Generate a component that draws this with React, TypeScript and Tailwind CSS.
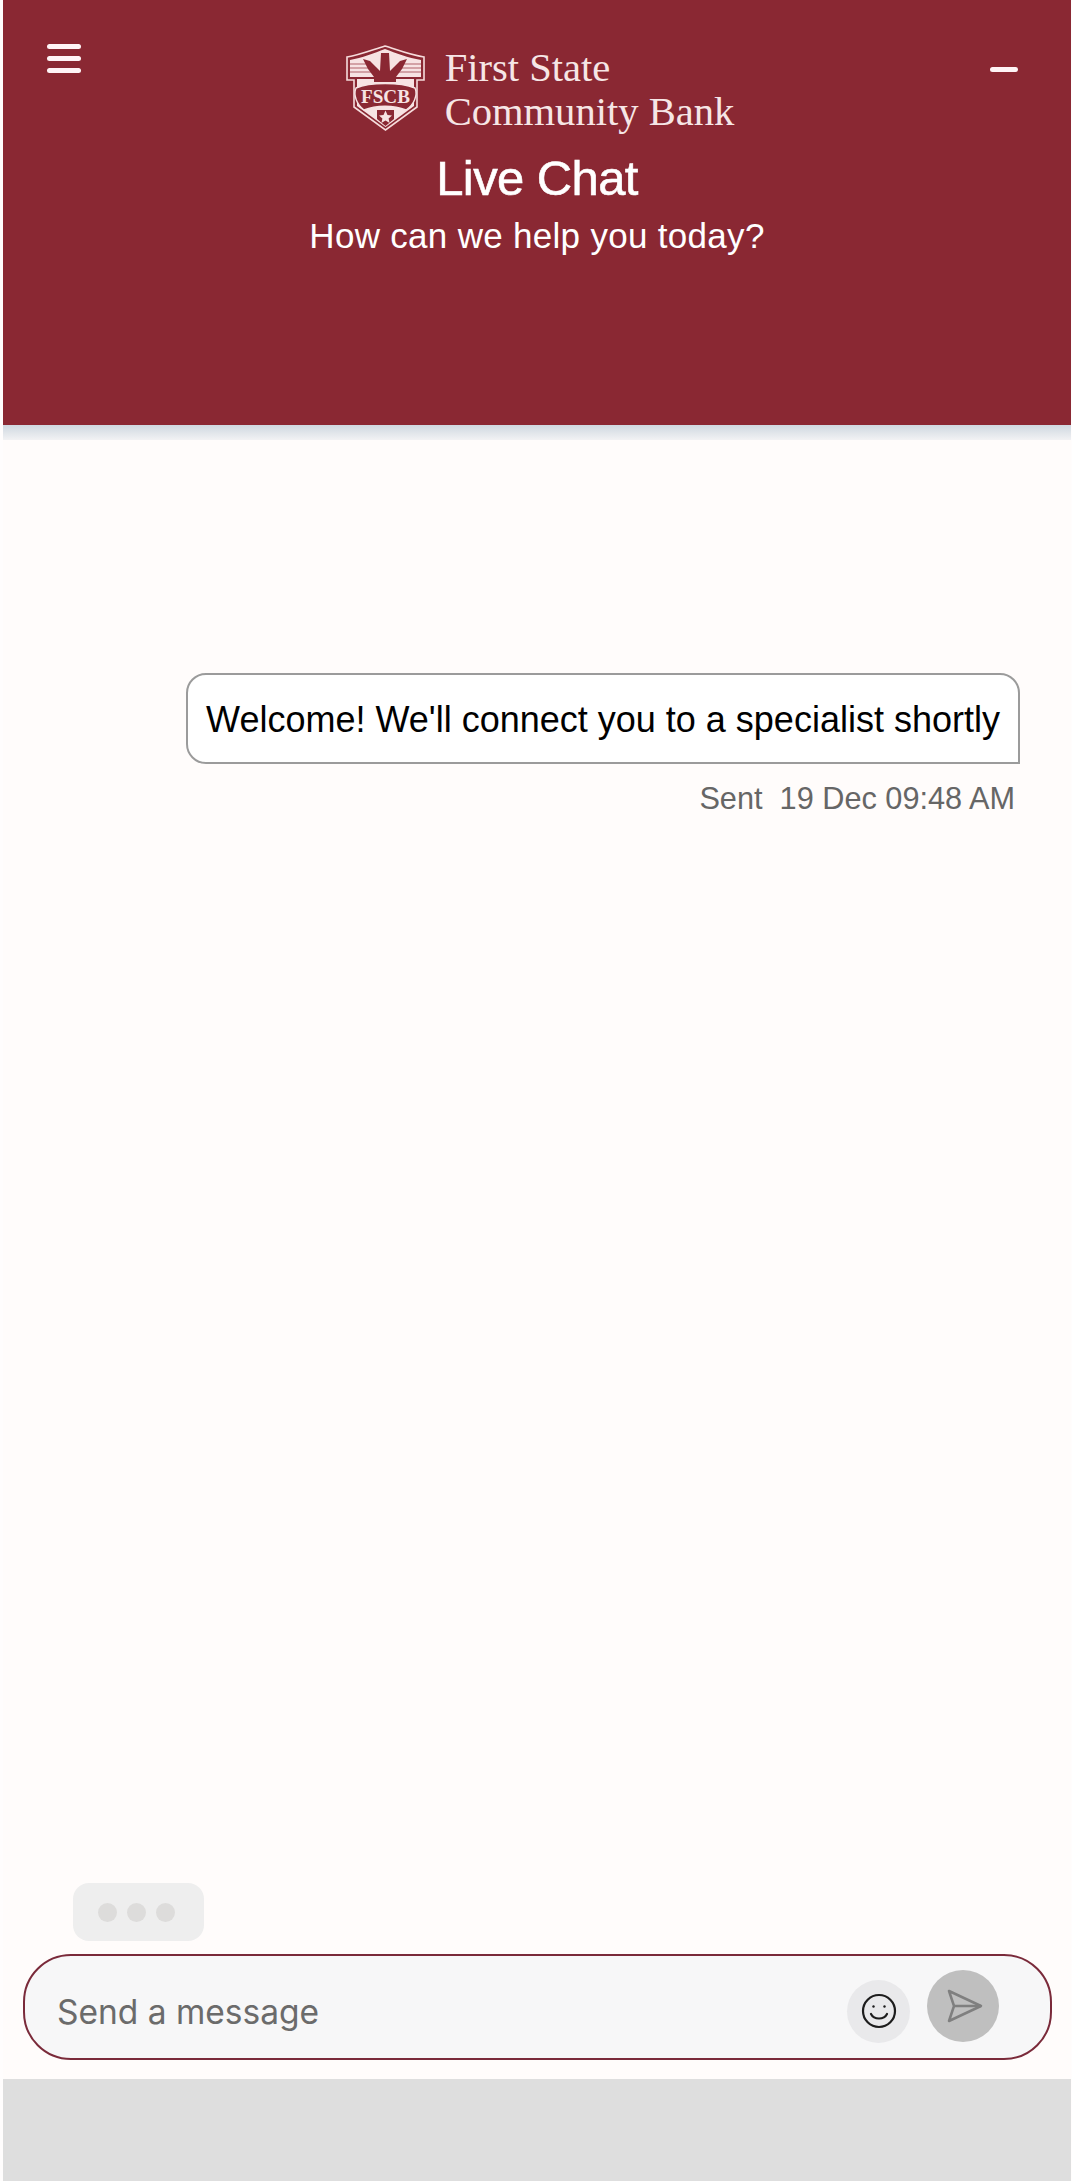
import React from "react";

function Logo() {
  return (
    <svg width="80" height="86" viewBox="0 0 80 86" className="shrink-0">
      <path d="M1 12 C 14 10 26 5 39 1 C 52 5 64 10 78 12 V 35 H 71 V 62 L 39.5 85 L 8 62 V 35 H 1 Z" fill="#8a2833" stroke="#f6dcdc" strokeWidth="1.6" />
      <path d="M4 15 C 16 13 28 8 39 4 C 50 8 62 13 75 15 V 32 H 4 Z" fill="#f7e3e3" />
      <path d="M11 34 H 68 V 61 L 39.5 82 L 11 61 Z" fill="#f7e3e3" />
      <path d="M4 19 H 23 M4 23 H 25 M4 27 H 27 M56 19 H 75 M54 23 H 75 M52 27 H 75" stroke="#c88d93" strokeWidth="1.6" />
      <path d="M17 14 L 24 16 L 30 22 L 34 26 L 35 8 H 43 L 44 26 L 48 22 L 54 16 L 61 14 L 56 24 L 50 32 V 37 H 28 V 32 L 22 24 Z" fill="#8a2833" />
      <path d="M10 43 C 24 37 54 37 69 43 C 72 50 68 60 60 65 C 48 60 30 60 18 65 C 11 60 7 50 10 43 Z" fill="#8a2833" stroke="#f7e3e3" strokeWidth="1.4" />
      <text x="39.5" y="58" textAnchor="middle" fontFamily="'Liberation Serif', serif" fontWeight="700" fontSize="18" fill="#f7e3e3" textLength="49" lengthAdjust="spacingAndGlyphs">FSCB</text>
      <path d="M31 65 H 48 V 74 L 39.5 81 L 31 74 Z" fill="#8a2833" />
      <path d="M39.5 65.5 L 41.5 70 L 46 70.5 L 42.6 73.6 L 43.6 78 L 39.5 75.6 L 35.4 78 L 36.4 73.6 L 33 70.5 L 37.5 70 Z" fill="#f7e3e3" />
    </svg>
  );
}

export default function App() {
  return (
    <div className="min-h-[2181px] bg-[#fffdfd] pl-[3px] pr-px font-['Liberation_Sans',sans-serif]">
      <div className="flex h-[2181px] flex-col bg-[#fffcfb]">
        <header className="relative flex h-[425px] shrink-0 flex-col items-center bg-[#8a2833] pt-[45px] text-white">
          <div className="absolute left-[44px] top-[44px] flex w-[34px] flex-col gap-[7px]">
            <span className="h-[5px] rounded-sm bg-[#fff4f6]" />
            <span className="h-[5px] rounded-sm bg-[#fff4f6]" />
            <span className="h-[5px] rounded-sm bg-[#fff4f6]" />
          </div>
          <span className="absolute left-[987px] top-[67px] h-[5px] w-[28px] rounded-sm bg-[#fff4f6]" />
          <div className="ml-[6px] flex items-start gap-[19px]">
            <Logo />
            <div className="pt-[1px] font-['Liberation_Serif',serif] text-[40.6px] leading-[44px] text-[#f6e6e6]">
              <div>First State</div>
              <div>Community Bank</div>
            </div>
          </div>
          <h1 className="mt-[16px] text-[49px] leading-[56px] tracking-[-0.6px] [-webkit-text-stroke:0.6px_white]">Live Chat</h1>
          <p className="mt-[8px] text-[35px] leading-[44px] tracking-[0.3px]">How can we help you today?</p>
        </header>
        <div className="h-[15px] shrink-0 bg-gradient-to-b from-[#cfd8e0] to-[#f2f2f4]" />
        <main className="flex flex-1 flex-col">
          <div className="mr-[51px] mt-[233px] self-end">
            <div className="flex h-[91px] w-[834px] items-center justify-center rounded-[20px] rounded-br-none border-2 border-[#9b9b9b] bg-white pt-[2px] text-[36px] text-black">
              Welcome! We'll connect you to a specialist shortly
            </div>
            <div className="mt-[17px] whitespace-pre pr-[5px] text-right text-[30.7px] leading-[36px] text-[#666666]">Sent  19 Dec 09:48 AM</div>
          </div>
          <div className="mt-auto ml-[70px] flex h-[58px] w-[131px] items-center justify-center gap-[10px] rounded-[16px] bg-[#eeeeee] pr-[5px]">
            <span className="h-[19px] w-[19px] rounded-full bg-[#dddcdb]" />
            <span className="h-[19px] w-[19px] rounded-full bg-[#dddcdb]" />
            <span className="h-[19px] w-[19px] rounded-full bg-[#dddcdb]" />
          </div>
          <div className="ml-[20px] mr-[19px] mb-[19px] mt-[13px] flex h-[106px] items-center rounded-[48px] border-[2.5px] border-[#7a2a3a] bg-[#f7f7f8] pl-[32px] pr-[51px]">
            <span className="mt-[10px] flex-1 font-['Inter',sans-serif] text-[33.5px] text-[#6b6b6b]">Send a message</span>
            <div className="mt-[8px] flex h-[63px] w-[63px] items-center justify-center rounded-full bg-[#e9e9eb]">
              <svg width="36" height="36" viewBox="0 0 36 36" fill="none" stroke="#1d1d1d" strokeWidth="2.2" strokeLinecap="round">
                <circle cx="18" cy="18" r="16" />
                <path d="M10 21 C 13 27 23 27 26 21" />
                <circle cx="12.5" cy="13.5" r="1.2" fill="#1d1d1d" stroke="none" />
                <circle cx="23.5" cy="13.5" r="1.2" fill="#1d1d1d" stroke="none" />
              </svg>
            </div>
            <div className="ml-[17px] mb-[2px] flex h-[72px] w-[72px] items-center justify-center rounded-full bg-[#bfbfbf]">
              <svg width="36" height="34" viewBox="0 0 36 34" fill="none" stroke="#7f7f7f" strokeWidth="2.5" strokeLinejoin="round" className="ml-[3px]">
                <path d="M2 2 L 34 17 L 2 32 L 7 17 Z" />
                <path d="M7 17 H 34" />
              </svg>
            </div>
          </div>
        </main>
        <footer className="h-[102px] shrink-0 bg-[#dedede]" />
      </div>
    </div>
  );
}
